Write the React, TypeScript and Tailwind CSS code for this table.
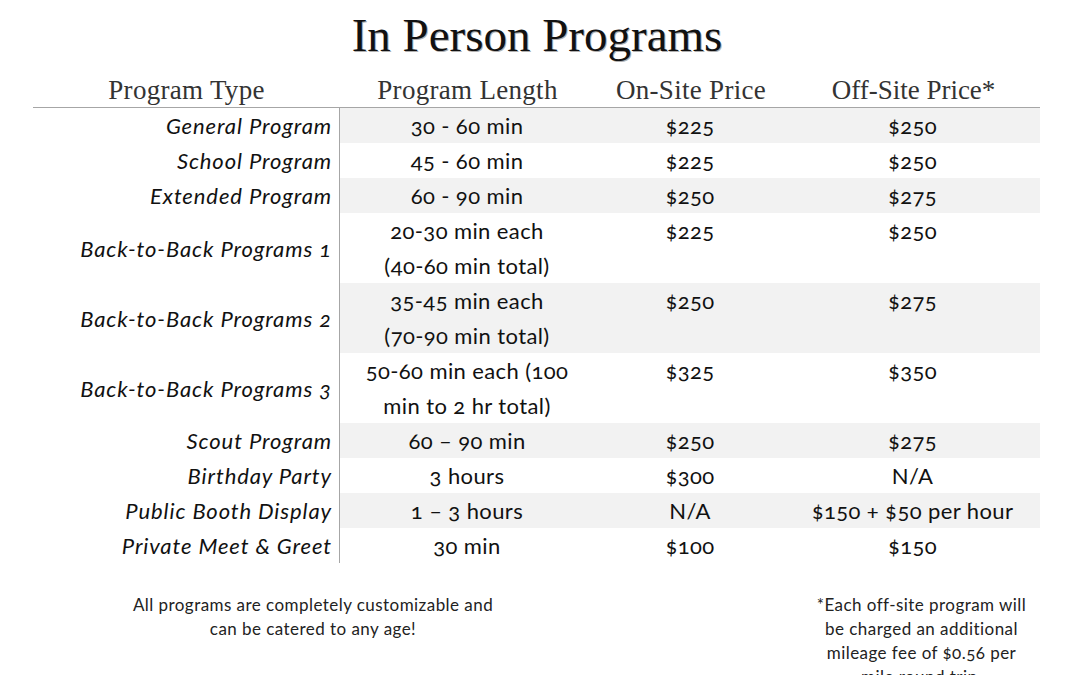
const rows = [
  { type: 'General Program', length: ['30 - 60 min'], on: '$225', off: '$250' },
  { type: 'School Program', length: ['45 - 60 min'], on: '$225', off: '$250' },
  { type: 'Extended Program', length: ['60 - 90 min'], on: '$250', off: '$275' },
  { type: 'Back-to-Back Programs 1', length: ['20-30 min each', '(40-60 min total)'], on: '$225', off: '$250' },
  { type: 'Back-to-Back Programs 2', length: ['35-45 min each', '(70-90 min total)'], on: '$250', off: '$275' },
  { type: 'Back-to-Back Programs 3', length: ['50-60 min each (100', 'min to 2 hr total)'], on: '$325', off: '$350' },
  { type: 'Scout Program', length: ['60 – 90 min'], on: '$250', off: '$275' },
  { type: 'Birthday Party', length: ['3 hours'], on: '$300', off: 'N/A' },
  { type: 'Public Booth Display', length: ['1 – 3 hours'], on: 'N/A', off: '$150 + $50 per hour' },
  { type: 'Private Meet & Greet', length: ['30 min'], on: '$100', off: '$150' },
]

const body = "font-['Lato','Open_Sans',sans-serif] oldstyle-nums"
const serif = "font-['Liberation_Serif','Times_New_Roman',serif]"

export default function App() {
  return (
    <div className="w-[1080px] h-[675px] overflow-hidden bg-white text-[#111]">
      <h1
        className={`${serif} pr-[6px] pt-[7px] text-center text-[47px] leading-[56px] text-[#111] [text-shadow:1px_1px_0_#b0b0b0]`}
      >
        In Person Programs
      </h1>

      <div className="ml-[33px] mt-[5px] w-[1007px]">
        <div
          className={`${serif} flex h-[40px] items-center border-b border-[#a6a6a6] pt-[6px] text-[27px] text-[#333]`}
        >
          <div className="w-[307px] text-center tracking-[0.3px]">Program Type</div>
          <div className="w-[255px] text-center tracking-[0.3px]">Program Length</div>
          <div className="w-[192px] text-center tracking-[0.3px]">On-Site Price</div>
          <div className="w-[253px] text-center">Off-Site Price*</div>
        </div>

        {rows.map((row, i) => (
          <div key={row.type} className={`${body} flex text-[22px] leading-[35px]`}>
            <div className="flex w-[307px] items-center justify-end border-r border-[#a6a6a6] pr-[7px] italic tracking-[0.9px]">
              {row.type}
            </div>
            <div className={`flex w-[700px] tracking-[0.4px] ${i % 2 === 0 ? 'bg-[#f2f2f2]' : ''}`}>
              <div className="w-[254px] text-center">
                {row.length.map((l) => (
                  <div key={l}>{l}</div>
                ))}
              </div>
              <div className="w-[192px] text-center">{row.on}</div>
              <div className="w-[253px] text-center">{row.off}</div>
            </div>
          </div>
        ))}
      </div>

      <div className={`${body} mt-[30px] flex text-[17px] leading-[24px] tracking-[0.45px] text-[#222]`}>
        <div className="ml-[103px] w-[420px] text-center">
          All programs are completely customizable and
          <br />
          can be catered to any age!
        </div>
        <div className="ml-[276px] w-[245px] text-center">
          *Each off-site program will
          <br />
          be charged an additional
          <br />
          mileage fee of $0.56 per
          <br />
          mile round trip.
        </div>
      </div>
    </div>
  )
}
